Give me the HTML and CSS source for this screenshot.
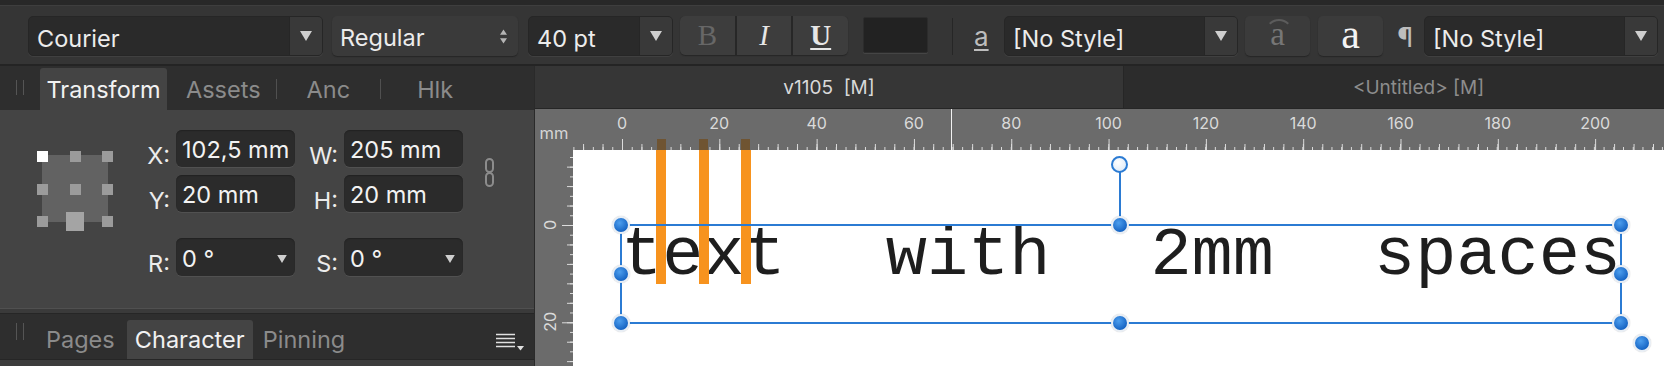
FILE: index.html
```html
<!DOCTYPE html>
<html lang="en">
<head>
    <meta charset="UTF-8">
    <meta name="viewport" content="width=device-width, initial-scale=1.0">
    <title>v1105 [M]</title>
    <link rel="stylesheet" href="styles.css">
</head>
<body>
<div class="app">
    <!-- context toolbar -->
    <div class="toolbar">
        <div class="combo font-combo">
            <span class="combo-value">Courier</span>
            <span class="combo-arrow"><svg class="tri" viewBox="0 0 12 10"><path d="M0 0h12L6 10z"/></svg></span>
        </div>
        <div class="popup weight-popup">
            <span>Regular</span>
            <svg class="spin" viewBox="0 0 8 16"><path d="M4 0l4 6H0zM0 10h8l-4 6z"/></svg>
        </div>
        <div class="combo size-combo">
            <span class="combo-value">40 pt</span>
            <span class="combo-arrow"><svg class="tri" viewBox="0 0 12 10"><path d="M0 0h12L6 10z"/></svg></span>
        </div>
        <div class="seg">
            <span class="seg-btn bold">B</span>
            <span class="seg-btn italic">I</span>
            <span class="seg-btn under">U</span>
        </div>
        <div class="swatch"></div>
        <div class="vsep"></div>
        <span class="cs-icon">a</span>
        <div class="combo cstyle-combo">
            <span class="combo-value">[No Style]</span>
            <span class="combo-arrow"><svg class="tri" viewBox="0 0 12 10"><path d="M0 0h12L6 10z"/></svg></span>
        </div>
        <div class="glyph-btn dim"><span class="arc-a">a</span></div>
        <div class="glyph-btn second">a</div>
        <span class="pilcrow">¶</span>
        <div class="combo pstyle-combo">
            <span class="combo-value">[No Style]</span>
            <span class="combo-arrow"><svg class="tri" viewBox="0 0 12 10"><path d="M0 0h12L6 10z"/></svg></span>
        </div>
    </div>

    <div class="main">
        <!-- left studio panel -->
        <div class="panel">
            <div class="ptabs">
                <span class="grip"></span>
                <span class="ptab active first">Transform</span>
                <span class="ptab assets">Assets</span>
                <span class="tsep s1"></span>
                <span class="ptab anc">Anc</span>
                <span class="tsep s2"></span>
                <span class="ptab hlk">Hlk</span>
            </div>

            <div class="tbody">
                <div class="anchor">
                    <span class="sq on"></span><span class="sq"></span><span class="sq"></span>
                    <span class="sq"></span><span class="sq"></span><span class="sq"></span>
                    <span class="sq"></span><span class="sq big"></span><span class="sq"></span>
                </div>
                <div class="fields">
                    <span class="lbl">X:</span><span class="fld">102,5 mm</span>
                    <span class="lbl">W:</span><span class="fld">205 mm</span>
                    <span class="lbl">Y:</span><span class="fld">20 mm</span>
                    <span class="lbl">H:</span><span class="fld">20 mm</span>
                    <span class="lbl last">R:</span>
                    <span class="fld last">0 °<svg class="tri small" viewBox="0 0 12 10"><path d="M0 0h12L6 10z"/></svg></span>
                    <span class="lbl last">S:</span>
                    <span class="fld last">0 °<svg class="tri small" viewBox="0 0 12 10"><path d="M0 0h12L6 10z"/></svg></span>
                </div>
                <svg class="chain" viewBox="0 0 11 29">
                    <rect x="2" y="1" width="7" height="13" rx="3.5"/>
                    <rect x="2" y="15" width="7" height="13" rx="3.5"/>
                </svg>
            </div>
            <div class="psep"></div>

            <div class="ptabs second">
                <span class="grip"></span>
                <span class="ptab pages">Pages</span>
                <span class="ptab active character">Character</span>
                <span class="ptab pinning">Pinning</span>
                <svg class="menu-icon" viewBox="0 0 28 18">
                    <path d="M0 1.5h19M0 5.5h19M0 9.5h19M0 13.5h19"/>
                    <path class="fill" d="M21 13h7l-3.5 4.5z"/>
                </svg>
            </div>
            <div class="prest"></div>
        </div>

        <!-- document view -->
        <div class="doc">
            <div class="doc-tabs">
                <div class="doc-tab active">v1105  [M]</div>
                <div class="doc-tab">&lt;Untitled&gt; [M]</div>
            </div>

            <div class="ruler-row">
                <div class="corner">mm</div>
                <div class="hruler">
                    <span class="num">0</span>
                    <span class="num">20</span>
                    <span class="num">40</span>
                    <span class="num">60</span>
                    <span class="num">80</span>
                    <span class="num">100</span>
                    <span class="num">120</span>
                    <span class="num">140</span>
                    <span class="num">160</span>
                    <span class="num">180</span>
                    <span class="num">200</span>
                    <span class="num"></span>
                    <span class="glyph-mark m1"></span>
                    <span class="glyph-mark m2"></span>
                    <span class="glyph-mark m3"></span>
                    <span class="cursor-mark"></span>
                </div>
            </div>

            <div class="canvas-row">
                <div class="vruler">
                    <div class="num"><span>0</span></div>
                    <div class="num"><span>20</span></div>
                </div>
                <div class="page">
                    <div class="text-frame">
                        <span>text</span><span>with</span><span>2mm</span><span>spaces</span>
                    </div>
                    <span class="bar b1"></span>
                    <span class="bar b2"></span>
                    <span class="bar b3"></span>
                    <div class="sel">
                        <span class="stem"></span>
                        <span class="knob"></span>
                        <span class="handle tl"></span>
                        <span class="handle tm"></span>
                        <span class="handle tr"></span>
                        <span class="handle ml"></span>
                        <span class="handle mr"></span>
                        <span class="handle bl"></span>
                        <span class="handle bm"></span>
                        <span class="handle br"></span>
                        <span class="handle ex"></span>
                    </div>
                </div>
            </div>
        </div>
    </div>
</div>
</body>
</html>
```

FILE: styles.css
```css
* { box-sizing: border-box; }
body {
    margin: 0;
    background: #2c2c2c;
    font-family: Inter, "Noto Sans", sans-serif;
    color: #ececec;
    overflow: hidden;
}
.app { width: 1664px; height: 366px; display: flex; flex-direction: column; }

/* toolbar */
.toolbar {
    height: 66px;
    flex: none;
    display: flex;
    align-items: flex-start;
    padding: 11px 0 0 28px;
    background: #353535;
    border-top: 5px solid #282828;
    border-bottom: 2px solid #242424;
    box-shadow: inset 0 1px 0 #3e3e3e;
}
.combo {
    display: flex;
    height: 40px;
    flex: none;
    background: #2a2a2a;
    border: 1px solid #262626;
    border-radius: 5px;
    box-shadow: 0 1px 0 #404040;
    overflow: hidden;
    font-size: 23.5px;
}
.combo-value { flex: 1; padding: 3px 0 0 8px; line-height: 38px; white-space: nowrap; color: #ececec; }
.combo-arrow {
    width: 33px;
    background: #393939;
    border-left: 1px solid #262626;
    display: flex;
    align-items: center;
    justify-content: center;
}
.tri { width: 12px; height: 10px; fill: #cfcfcf; }
.tri.small { width: 10px; height: 8px; margin-right: 8px; align-self: center; }
.font-combo { width: 295px; }
.size-combo { width: 145px; margin-left: 10px; }
.cstyle-combo { width: 234px; margin-left: 11px; }
.pstyle-combo { width: 234px; margin-left: 14px; }

.popup {
    height: 40px;
    display: flex;
    align-items: center;
    justify-content: space-between;
    padding: 3px 11px 0 8px;
    background: #3a3a3a;
    border-radius: 5px;
    box-shadow: 0 1px 1px #262626;
    font-size: 23.5px;
}
.weight-popup { width: 186px; margin-left: 9px; }
.spin { width: 7px; height: 15px; margin-top: -3px; fill: #b5b5b5; }

.seg {
    display: flex;
    width: 168px;
    height: 39px;
    margin-left: 7px;
    gap: 2px;
    border-radius: 5px;
    overflow: hidden;
    background: #272727;
    box-shadow: 0 1px 1px #262626;
}
.seg-btn {
    flex: 1;
    display: flex;
    align-items: center;
    justify-content: center;
    background: #3d3d3d;
    font-family: "Liberation Serif", serif;
    font-size: 29px;
    color: #e6e6e6;
}
.seg-btn.bold { color: #676767; }
.seg-btn.italic { font-style: italic; }
.seg-btn.under {
    font-weight: bold;
    text-decoration: underline;
    text-decoration-thickness: 2px;
    text-underline-offset: 3px;
}
.swatch {
    width: 65px;
    height: 36px;
    margin: 1px 0 0 15px;
    background: #222;
    border: 1px solid #2c2c2c;
    border-radius: 2px;
    box-shadow: 0 1px 0 #454545;
}
.vsep { width: 1px; height: 37px; margin: 2px 0 0 24px; background: #262626; }
.cs-icon {
    width: 19px;
    margin-left: 21px;
    padding-top: 1px;
    font-size: 26px;
    line-height: 40px;
    color: #bdbdbd;
    text-decoration: underline;
    text-decoration-thickness: 2px;
    text-underline-offset: 3px;
}
.glyph-btn {
    width: 65px;
    height: 40px;
    margin-left: 7px;
    display: flex;
    align-items: center;
    justify-content: center;
    background: #3b3b3b;
    border-radius: 5px;
    box-shadow: 0 1px 1px #262626;
    font-family: "Liberation Serif", serif;
    font-size: 42px;
    line-height: 40px;
    color: #f4f4f4;
    padding-bottom: 5px;
}
.glyph-btn.second { margin-left: 8px; }
.glyph-btn.dim { color: #767676; font-size: 33px; }
.arc-a { position: relative; }
.arc-a::before {
    content: "";
    position: absolute;
    left: -5px;
    top: 5px;
    width: 24px;
    height: 24px;
    border: 2px solid transparent;
    border-top-color: #5c5c5c;
    border-radius: 50%;
}
.pilcrow { width: 13px; margin-left: 14px; padding-top: 2px; font-size: 27px; line-height: 40px; color: #bdbdbd; }

/* layout below toolbar */
.main { flex: 1; display: flex; min-height: 0; }

.panel {
    width: 535px;
    flex: none;
    display: flex;
    flex-direction: column;
    background: #3c3c3c;
    border-right: 1px solid #2a2a2a;
}
.ptabs {
    height: 44px;
    flex: none;
    display: flex;
    align-items: flex-end;
    padding-left: 16px;
    background: #2e2e2e;
    font-size: 23.5px;
    color: #8b8b8b;
}
.grip {
    width: 8px;
    height: 15px;
    margin-bottom: 15px;
    border-left: 1px solid #555;
    border-right: 1px solid #555;
}
.ptab { line-height: 40px; padding-top: 2px; white-space: nowrap; }
.ptab.active {
    background: #444;
    color: #f2f2f2;
    text-align: center;
    border-radius: 3px 3px 0 0;
}
.ptab.first { width: 127px; margin-left: 16px; }
.assets { margin-left: 19px; }
.tsep { width: 1px; height: 20px; margin-bottom: 11px; background: #505050; }
.s1 { margin-left: 15px; }
.anc { margin-left: 30px; }
.s2 { margin-left: 30px; }
.hlk { margin-left: 36px; }

.tbody {
    height: 198px;
    flex: none;
    display: flex;
    align-items: flex-start;
    padding: 20px 0 0 37px;
    background: #444;
}
.anchor {
    position: relative;
    width: 76px;
    height: 76px;
    margin-top: 21px;
    display: grid;
    grid-template-columns: repeat(3, 11px);
    grid-template-rows: repeat(3, 11px);
    justify-content: space-between;
    align-content: space-between;
    place-items: center;
}
.anchor::before {
    content: "";
    position: absolute;
    left: 5px;
    top: 4px;
    width: 66px;
    height: 67px;
    background: #626262;
}
.sq { position: relative; width: 11px; height: 11px; background: #9b9b9b; }
.sq.on { background: #fff; }
.sq.big { width: 18px; height: 19px; background: #a4a4a4; }

.fields {
    margin-left: 33px;
    display: grid;
    grid-template-columns: 30px 119px 49px 119px;
    grid-template-rows: 37px 37px 56px;
    row-gap: 8px;
}
.lbl {
    font-size: 23.5px;
    line-height: 40px;
    padding: 6px 6px 0 0;
    text-align: right;
    color: #ececec;
}
.fld {
    height: 37px;
    display: flex;
    justify-content: space-between;
    padding: 3px 0 0 6px;
    background: #2b2b2b;
    border-radius: 6px;
    box-shadow: inset 0 1px 1px #222, 0 1px 0 #515151;
    font-size: 23.5px;
    line-height: 34px;
    white-space: nowrap;
    overflow: hidden;
    color: #f2f2f2;
}
.lbl.last { align-self: end; margin-bottom: -8px; }
.fld.last { align-self: end; height: 38px; line-height: 35px; }
.chain {
    width: 11px;
    height: 29px;
    margin: 28px 0 0 21px;
    fill: none;
    stroke: #8c8c8c;
    stroke-width: 2;
}

.psep {
    height: 6px;
    flex: none;
    background: #3a3a3a;
    border-top: 1px solid #505050;
    border-bottom: 1px solid #262626;
}
.ptabs.second { height: 46px; border-bottom: 1px solid #262626; }
.ptabs.second .ptab { line-height: 39px; padding-top: 0; }
.ptabs.second .grip { margin-bottom: 19px; height: 17px; }
.pages { margin-left: 22px; }
.character { width: 126px; margin-left: 12px; background: #424242; }
.pinning { margin-left: 10px; }
.menu-icon {
    width: 28px;
    height: 18px;
    margin: 0 10px 8px auto;
    fill: none;
    stroke: #e0e0e0;
    stroke-width: 1.6;
}
.menu-icon .fill { fill: #e0e0e0; stroke: none; }
.prest { flex: 1; background: #3c3c3c; }

/* document area */
.doc { flex: 1; min-width: 0; display: flex; flex-direction: column; overflow: hidden; }
.doc-tabs {
    height: 43px;
    flex: none;
    display: flex;
    background: #2c2c2c;
    border-bottom: 1px solid #262626;
    font-size: 19px;
}
.doc-tab {
    flex: 0 0 589px;
    display: flex;
    align-items: center;
    justify-content: center;
    white-space: pre;
    color: #8d8d8d;
}
.doc-tab.active { background: #363636; color: #d9d9d9; border-right: 1px solid #262626; }

.ruler-row { height: 41px; flex: none; display: flex; background: #6b6b6b; }
.corner {
    width: 38px;
    flex: none;
    padding-top: 15px;
    text-align: center;
    font-size: 16.5px;
    line-height: 18px;
    color: #d6d6d6;
}
.hruler {
    flex: 1;
    position: relative;
    display: flex;
    padding-left: 0.34px;
    overflow: hidden;
    background-image:
        linear-gradient(to right, #dcdcdc 1px, transparent 1px),
        linear-gradient(to right, #dcdcdc 1px, transparent 1px),
        linear-gradient(to right, #dcdcdc 1px, transparent 1px);
    background-size: 97.32px 11px, 19.464px 6px, 9.732px 3px;
    background-position: 49px 100%;
    background-repeat: repeat-x;
}
.hruler .num {
    flex: 0 0 97.32px;
    padding-top: 5px;
    text-align: center;
    font-size: 16px;
    line-height: 18px;
    color: #dadada;
}
.glyph-mark { position: absolute; bottom: 0; width: 9px; height: 11px; background: #6f5432; }
.m1 { left: 84px; }
.m2 { left: 126px; }
.m3 { left: 168px; }
.cursor-mark { position: absolute; left: 378px; top: 0; bottom: 0; width: 1px; background: #f2f2f2; }

.canvas-row { flex: 1; display: flex; min-height: 0; }
.vruler {
    width: 38px;
    flex: none;
    padding-top: 26.34px;
    overflow: hidden;
    background-color: #6b6b6b;
    background-image:
        linear-gradient(to bottom, #dcdcdc 1px, transparent 1px),
        linear-gradient(to bottom, #dcdcdc 1px, transparent 1px),
        linear-gradient(to bottom, #dcdcdc 1px, transparent 1px);
    background-size: 11px 97.32px, 6px 19.464px, 3px 9.732px;
    background-position: 100% 75px;
    background-repeat: repeat-y;
}
.vruler .num { height: 97.32px; display: flex; align-items: center; padding-left: 6px; }
.vruler .num span {
    writing-mode: vertical-rl;
    transform: rotate(180deg);
    font-size: 16px;
    line-height: 18px;
    color: #dadada;
}

.page { flex: 1; position: relative; background: #fff; overflow: hidden; }
.text-frame {
    position: absolute;
    left: 48px;
    top: 72px;
    width: 1000px;
    display: flex;
    justify-content: space-between;
    font-family: "Liberation Mono", monospace;
    font-size: 68.6px;
    line-height: 68px;
    color: #1e1e1e;
}
.bar { position: absolute; top: 0; width: 9.5px; height: 134px; background: #f7931e; }
.b1 { left: 83px; }
.b2 { left: 126px; }
.b3 { left: 168px; }

.sel {
    position: absolute;
    left: 47px;
    top: 74px;
    width: 1002px;
    height: 100px;
    border: 2px solid #2b7bd3;
}
.stem { position: absolute; left: calc(50% - 2px); top: -54px; width: 1.5px; height: 54px; background: #2b7bd3; }
.knob {
    position: absolute;
    left: calc(50% - 10px);
    top: -70px;
    width: 17px;
    height: 17px;
    border-radius: 50%;
    border: 2px solid #2b7bd3;
    background: radial-gradient(circle at 40% 35%, #fff, #d6e6f7);
}
.handle {
    position: absolute;
    width: 18px;
    height: 18px;
    border-radius: 50%;
    border: 2px solid #e8eef5;
    background: radial-gradient(circle at 40% 35%, #4c9eee, #1462c2 75%);
    box-shadow: 0 0 1px rgba(0, 0, 0, 0.35);
}
.tl { left: -10px; top: -10px; }
.tm { left: calc(50% - 10px); top: -10px; }
.tr { right: -10px; top: -10px; }
.ml { left: -10px; top: calc(50% - 9px); }
.mr { right: -10px; top: calc(50% - 9px); }
.bl { left: -10px; bottom: -10px; }
.bm { left: calc(50% - 10px); bottom: -10px; }
.br { right: -10px; bottom: -10px; }
.ex { right: -31px; bottom: -30px; }
```
